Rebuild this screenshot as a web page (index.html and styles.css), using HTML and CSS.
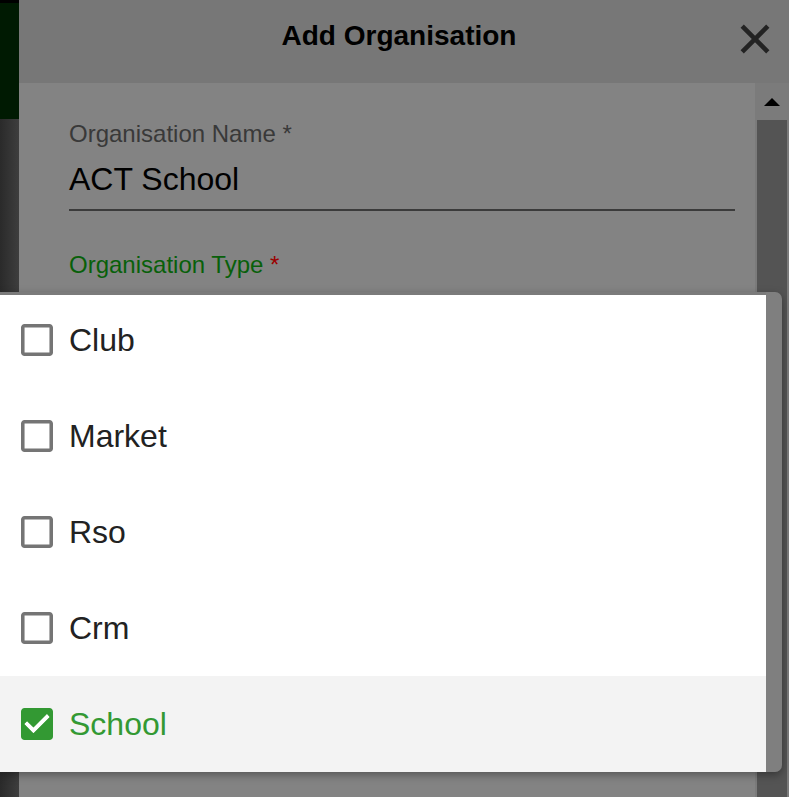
FILE: index.html
```html
<!DOCTYPE html>
<html lang="en">
<head>
<meta charset="utf-8">
<title>Add Organisation</title>
<link rel="stylesheet" href="styles.css">
</head>
<body>
<div class="page">
  <div class="side">
    <div class="side-top"></div>
    <div class="side-green"></div>
    <div class="side-rest"></div>
  </div>
  <div class="dialog">
    <div class="dialog-header">
      <span></span>
      <h1 class="title">Add Organisation</h1>
      <button class="close" aria-label="Close">
        <svg viewBox="0 0 30 30" width="30" height="30"><path d="M2.2 2.2 L27.8 27.8 M27.8 2.2 L2.2 27.8" stroke="#232323" stroke-width="4.6" fill="none"/></svg>
      </button>
    </div>
    <div class="dialog-main">
      <div class="dialog-body">
        <div class="field">
          <label class="label">Organisation Name *</label>
          <div class="input">ACT School</div>
        </div>
        <div class="field">
          <label class="label label-active">Organisation Type <span class="req">*</span></label>
        </div>
      </div>
      <div class="scrollbar">
        <div class="scroll-btn"><span class="arrow-up"></span></div>
        <div class="scroll-thumb"></div>
      </div>
    </div>
  </div>
</div>

<div class="menu">
  <ul class="menu-list">
    <li class="option">
      <svg class="cb" viewBox="3 3 18 18" width="32" height="32"><path fill="#757575" d="M19 5v14H5V5h14m0-2H5c-1.1 0-2 .9-2 2v14c0 1.1.9 2 2 2h14c1.1 0 2-.9 2-2V5c0-1.1-.9-2-2-2z"/></svg>
      <span>Club</span>
    </li>
    <li class="option">
      <svg class="cb" viewBox="3 3 18 18" width="32" height="32"><path fill="#757575" d="M19 5v14H5V5h14m0-2H5c-1.1 0-2 .9-2 2v14c0 1.1.9 2 2 2h14c1.1 0 2-.9 2-2V5c0-1.1-.9-2-2-2z"/></svg>
      <span>Market</span>
    </li>
    <li class="option">
      <svg class="cb" viewBox="3 3 18 18" width="32" height="32"><path fill="#757575" d="M19 5v14H5V5h14m0-2H5c-1.1 0-2 .9-2 2v14c0 1.1.9 2 2 2h14c1.1 0 2-.9 2-2V5c0-1.1-.9-2-2-2z"/></svg>
      <span>Rso</span>
    </li>
    <li class="option">
      <svg class="cb" viewBox="3 3 18 18" width="32" height="32"><path fill="#757575" d="M19 5v14H5V5h14m0-2H5c-1.1 0-2 .9-2 2v14c0 1.1.9 2 2 2h14c1.1 0 2-.9 2-2V5c0-1.1-.9-2-2-2z"/></svg>
      <span>Crm</span>
    </li>
    <li class="option option-selected">
      <svg class="cb" viewBox="3 3 18 18" width="32" height="32"><path fill="#339933" d="M19 3H5c-1.11 0-2 .9-2 2v14c0 1.1.89 2 2 2h14c1.11 0 2-.9 2-2V5c0-1.1-.89-2-2-2zm-9 14l-5-5 1.41-1.41L10 14.17l7.59-7.59L19 8l-9 9z"/><path fill="#ffffff" d="M10 17l-5-5 1.41-1.41L10 14.17l7.59-7.59L19 8l-9 9z"/></svg>
      <span>School</span>
    </li>
  </ul>
  <div class="menu-gutter"></div>
</div>
</body>
</html>
```

FILE: styles.css
```css
* { box-sizing: border-box; }

html, body {
  margin: 0;
  padding: 0;
  height: 100%;
  overflow: hidden;
  font-family: "Liberation Sans", Arial, sans-serif;
}

.page {
  display: flex;
  height: 797px;
}

.side {
  width: 19px;
  display: flex;
  flex-direction: column;
}
.side-top { height: 3px; background: #000; }
.side-green { height: 116px; background: #001a02; }
.side-rest { flex: 1; background: linear-gradient(90deg, #2a2a2a, #3e3e3e); }

.dialog {
  flex: 1;
  display: flex;
  flex-direction: column;
}

.dialog-header {
  height: 83px;
  background: #777777;
  display: grid;
  grid-template-columns: 1fr auto 1fr;
  align-items: start;
  padding: 22px 10px 0 0;
}

.title {
  margin: 0;
  font-size: 28px;
  line-height: 28px;
  font-weight: bold;
  color: #000;
}

.close {
  justify-self: end;
  margin: 2px 9px 0 0;
  padding: 0;
  border: 0;
  background: none;
  width: 30px;
  height: 30px;
  display: block;
}
.close svg { display: block; }

.dialog-main {
  flex: 1;
  display: flex;
}

.dialog-body {
  flex: 1;
  background: #838383;
  padding: 37px 20px 0 50px;
}

.field { display: flex; flex-direction: column; }
.field + .field { margin-top: 40px; }

.label {
  font-size: 24px;
  line-height: 28px;
  color: #393939;
}
.label-active { color: #08600a; }
.req { color: #9c0000; }

.input {
  margin-top: 11px;
  font-size: 32px;
  line-height: 40px;
  color: #000;
  padding-bottom: 10px;
  border-bottom: 2px solid #3b3b3b;
}

.scrollbar {
  width: 34px;
  background: #7b7b7b;
  display: flex;
  flex-direction: column;
  padding: 0 2px 0 2px;
}
.scroll-btn {
  height: 37px;
  display: flex;
  align-items: center;
  justify-content: center;
}
.arrow-up {
  width: 0;
  height: 0;
  border-left: 8px solid transparent;
  border-right: 8px solid transparent;
  border-bottom: 8px solid #000;
}
.scroll-thumb {
  flex: 1;
  background: #545454;
}

/* dropdown overlay */
.menu {
  position: absolute;
  left: 0;
  top: 292px;
  width: 782px;
  height: 480px;
  display: flex;
  border-radius: 0 7px 7px 0;
  overflow: hidden;
  box-shadow: 0 3px 8px rgba(0, 0, 0, 0.35);
}

.menu-list {
  flex: 1;
  margin: 0;
  padding: 0;
  list-style: none;
  background: #fff;
  box-shadow: inset 0 3px 0 #7b7b7b;
}

.menu-gutter {
  width: 16px;
  background: #7f7f7f;
}

.option {
  height: 96px;
  display: flex;
  align-items: center;
  gap: 16px;
  padding-left: 21px;
  font-size: 32px;
  color: #222;
}
.option .cb { display: block; flex: none; }

.option-selected {
  background: #f3f3f3;
  color: #339933;
}
```
